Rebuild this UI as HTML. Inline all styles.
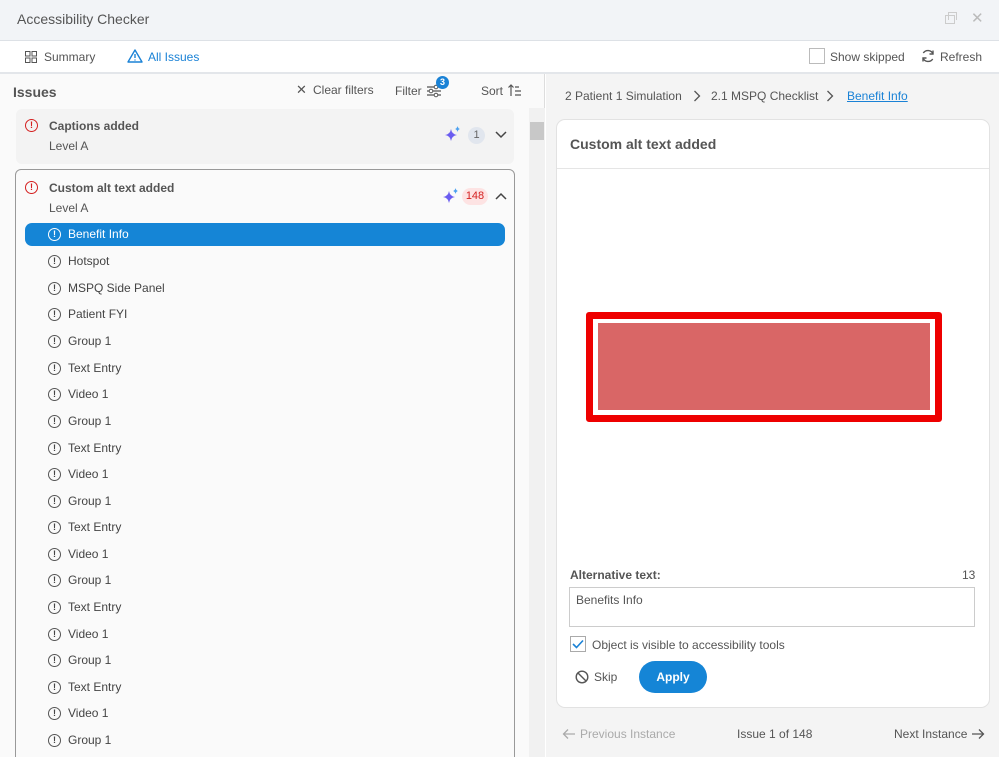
<!DOCTYPE html><html><head><style>
*{box-sizing:border-box;margin:0;padding:0}
html,body{width:999px;height:757px;overflow:hidden}
body{font-family:"Liberation Sans",sans-serif;font-size:12px;color:#444;background:#fff;position:relative}
.a{position:absolute}
.ic{display:inline-block;width:13px;height:13px;border:1.5px solid #555;border-radius:50%;position:absolute;font-size:9px;font-weight:bold;text-align:center;line-height:10px}
.item{position:absolute;left:48px;font-size:12px;color:#444}
.item .ic{left:0;top:0}
.item span{position:absolute;left:20px;top:-1px;white-space:nowrap}
</style></head><body>
<div class="a" style="left:0;top:0;width:999px;height:41px;background:#f2f4f7;border-bottom:1px solid #dde1e6"></div>
<div class="a" style="left:17px;top:11px;font-size:14px;color:#555">Accessibility Checker</div>
<div class="a" style="left:948px;top:12px;width:9px;height:8px;border:1.5px solid #ccc;border-bottom:none"></div>
<div class="a" style="left:945px;top:15px;width:10px;height:9px;border:1.5px solid #ccc"></div>
<div class="a" style="left:971px;top:9px;font-size:15px;color:#bbb">✕</div>
<div class="a" style="left:0;top:72px;width:999px;height:2px;background:#e3e6ea"></div>
<svg class="a" style="left:25px;top:51px" width="12" height="12"><rect x="0.5" y="0.5" width="4.5" height="4.5" fill="none" stroke="#555"/><rect x="7" y="0.5" width="4.5" height="4.5" fill="none" stroke="#555"/><rect x="0.5" y="7" width="4.5" height="4.5" fill="none" stroke="#555"/><rect x="7" y="7" width="4.5" height="4.5" fill="none" stroke="#555"/></svg>
<div class="a" style="left:44px;top:50px;color:#555">Summary</div>
<svg class="a" style="left:127px;top:49px" width="16" height="14"><path d="M8 1L15 13H1Z" fill="none" stroke="#1a82d6" stroke-width="1.4" stroke-linejoin="round"/><path d="M8 5v4M8 10.5v1" stroke="#1a82d6" stroke-width="1.4"/></svg>
<div class="a" style="left:148px;top:50px;color:#1a82d6">All Issues</div>
<div class="a" style="left:809px;top:48px;width:16px;height:16px;border:1px solid #bbb"></div>
<div class="a" style="left:830px;top:50px;color:#555">Show skipped</div>
<svg class="a" style="left:921px;top:49px" width="14" height="14"><path d="M12 5A5.5 5.5 0 0 0 2.3 4M2 9a5.5 5.5 0 0 0 9.7 1" fill="none" stroke="#555" stroke-width="1.4"/><path d="M12 1.5V5H8.5M2 12.5V9h3.5" fill="none" stroke="#555" stroke-width="1.4"/></svg>
<div class="a" style="left:940px;top:50px;color:#555">Refresh</div>
<!-- left -->
<div class="a" style="left:0;top:74px;width:545px;height:683px;background:#fafafa;border-right:1px solid #ddd"></div>
<div class="a" style="left:13px;top:84px;font-size:14px;font-weight:bold;color:#555">Issues</div>
<div class="a" style="left:296px;top:82px;font-size:13px;color:#555">✕</div>
<div class="a" style="left:313px;top:83px;color:#555">Clear filters</div>
<div class="a" style="left:395px;top:84px;color:#555">Filter</div>
<svg class="a" style="left:426px;top:84px" width="16" height="14"><path d="M1 3h14M1 7h14M1 11h14" stroke="#555" stroke-width="1.2"/><circle cx="10" cy="3" r="1.8" fill="#fff" stroke="#555"/><circle cx="5" cy="7" r="1.8" fill="#fff" stroke="#555"/><circle cx="10" cy="11" r="1.8" fill="#fff" stroke="#555"/></svg>
<div class="a" style="left:436px;top:76px;width:13px;height:13px;border-radius:50%;background:#1a82d6;color:#fff;font-size:9px;font-weight:bold;text-align:center;line-height:13px">3</div>
<div class="a" style="left:481px;top:84px;color:#555">Sort</div>
<svg class="a" style="left:508px;top:83px" width="14" height="14"><path d="M3 13V2M0.5 4.5L3 2l2.5 2.5M7 4h4M7 8h6M7 12h6" fill="none" stroke="#555" stroke-width="1.2"/></svg>
<div class="a" style="left:529px;top:108px;width:16px;height:649px;background:#f1f1f1"></div>
<div class="a" style="left:530px;top:122px;width:14px;height:18px;background:#c8c8c8"></div>
<div class="a" style="left:16px;top:109px;width:498px;height:55px;background:#f3f3f3;border-radius:6px"></div>
<div class="ic" style="left:25px;top:119px;border-color:#d42020;color:#d42020">!</div>
<div class="a" style="left:49px;top:119px;font-weight:bold;color:#555">Captions added</div>
<div class="a" style="left:49px;top:139px;color:#555">Level A</div>
<svg class="a" style="left:445px;top:126px" width="16" height="16"><path d="M6 3Q6.8 8.2 12 9 6.8 9.8 6 15 5.2 9.8 0 9 5.2 8.2 6 3Z" fill="#6a5cf0"/><path d="M12.5 0Q13 2.5 15 3 13 3.5 12.5 6 12 3.5 10 3 12 2.5 12.5 0Z" fill="#4aa0f0"/></svg>
<div class="a" style="left:468px;top:127px;width:17px;height:17px;border-radius:50%;background:#e1e6ee;text-align:center;line-height:17px;font-size:11px;color:#666">1</div>
<svg class="a" style="left:495px;top:131px" width="12" height="8"><path d="M1 1l5 5 5-5" fill="none" stroke="#444" stroke-width="1.5"/></svg>
<div class="a" style="left:15px;top:169px;width:500px;height:600px;border:1px solid #999;border-radius:6px;background:#fafafa"></div>
<div class="ic" style="left:25px;top:181px;border-color:#d42020;color:#d42020">!</div>
<div class="a" style="left:49px;top:181px;font-weight:bold;color:#555">Custom alt text added</div>
<div class="a" style="left:49px;top:201px;color:#555">Level A</div>
<svg class="a" style="left:443px;top:188px" width="16" height="16"><path d="M6 3Q6.8 8.2 12 9 6.8 9.8 6 15 5.2 9.8 0 9 5.2 8.2 6 3Z" fill="#6a5cf0"/><path d="M12.5 0Q13 2.5 15 3 13 3.5 12.5 6 12 3.5 10 3 12 2.5 12.5 0Z" fill="#4aa0f0"/></svg>
<div class="a" style="left:462px;top:188px;width:26px;height:17px;border-radius:9px;background:#fde3e3;text-align:center;line-height:17px;font-size:11px;color:#d42020">148</div>
<svg class="a" style="left:495px;top:192px" width="12" height="8"><path d="M1 7l5-5 5 5" fill="none" stroke="#444" stroke-width="1.5"/></svg>
<div class="a" style="left:25px;top:223px;width:480px;height:23px;border-radius:7px;background:#1585d6"></div>
<div class="item" style="top:228px;color:#fff"><i class="ic" style="border-color:#fff;color:#fff;font-style:normal">!</i><span>Benefit Info</span></div>
<div class="item" style="top:255px"><i class="ic" style="font-style:normal">!</i><span>Hotspot</span></div>
<div class="item" style="top:282px"><i class="ic" style="font-style:normal">!</i><span>MSPQ Side Panel</span></div>
<div class="item" style="top:308px"><i class="ic" style="font-style:normal">!</i><span>Patient FYI</span></div>
<div class="item" style="top:335px"><i class="ic" style="font-style:normal">!</i><span>Group 1</span></div>
<div class="item" style="top:362px"><i class="ic" style="font-style:normal">!</i><span>Text Entry</span></div>
<div class="item" style="top:388px"><i class="ic" style="font-style:normal">!</i><span>Video 1</span></div>
<div class="item" style="top:415px"><i class="ic" style="font-style:normal">!</i><span>Group 1</span></div>
<div class="item" style="top:442px"><i class="ic" style="font-style:normal">!</i><span>Text Entry</span></div>
<div class="item" style="top:468px"><i class="ic" style="font-style:normal">!</i><span>Video 1</span></div>
<div class="item" style="top:495px"><i class="ic" style="font-style:normal">!</i><span>Group 1</span></div>
<div class="item" style="top:521px"><i class="ic" style="font-style:normal">!</i><span>Text Entry</span></div>
<div class="item" style="top:548px"><i class="ic" style="font-style:normal">!</i><span>Video 1</span></div>
<div class="item" style="top:574px"><i class="ic" style="font-style:normal">!</i><span>Group 1</span></div>
<div class="item" style="top:601px"><i class="ic" style="font-style:normal">!</i><span>Text Entry</span></div>
<div class="item" style="top:628px"><i class="ic" style="font-style:normal">!</i><span>Video 1</span></div>
<div class="item" style="top:654px"><i class="ic" style="font-style:normal">!</i><span>Group 1</span></div>
<div class="item" style="top:681px"><i class="ic" style="font-style:normal">!</i><span>Text Entry</span></div>
<div class="item" style="top:707px"><i class="ic" style="font-style:normal">!</i><span>Video 1</span></div>
<div class="item" style="top:734px"><i class="ic" style="font-style:normal">!</i><span>Group 1</span></div>
<!-- right -->
<div class="a" style="left:546px;top:74px;width:453px;height:683px;background:#f4f4f4"></div>
<div class="a" style="left:565px;top:89px;color:#555">2 Patient 1 Simulation</div>
<svg class="a" style="left:693px;top:90px" width="8" height="12"><path d="M1.5 1l5 5-5 5" fill="none" stroke="#555" stroke-width="1.3"/></svg>
<div class="a" style="left:711px;top:89px;color:#555">2.1 MSPQ Checklist</div>
<svg class="a" style="left:826px;top:90px" width="8" height="12"><path d="M1.5 1l5 5-5 5" fill="none" stroke="#555" stroke-width="1.3"/></svg>
<div class="a" style="left:847px;top:89px;color:#1a82d6;text-decoration:underline">Benefit Info</div>
<div class="a" style="left:556px;top:119px;width:434px;height:589px;background:#fff;border:1px solid #e2e2e2;border-radius:9px"></div>
<div class="a" style="left:557px;top:168px;width:432px;height:1px;background:#e5e5e5"></div>
<div class="a" style="left:570px;top:136px;font-size:14px;font-weight:bold;color:#555">Custom alt text added</div>
<div class="a" style="left:586px;top:312px;width:356px;height:110px;border:7px solid #ee0000;border-radius:3px;background:#fff"></div>
<div class="a" style="left:598px;top:323px;width:332px;height:87px;background:#d96666"></div>
<div class="a" style="left:570px;top:568px;font-weight:bold;color:#555">Alternative text:</div>
<div class="a" style="left:962px;top:568px;color:#555">13</div>
<div class="a" style="left:569px;top:587px;width:406px;height:40px;border:1px solid #ccc"></div>
<div class="a" style="left:576px;top:593px;color:#555">Benefits Info</div>
<div class="a" style="left:570px;top:636px;width:16px;height:16px;border:1px solid #aaa;background:#fff"></div>
<svg class="a" style="left:572px;top:639px" width="12" height="10"><path d="M1 5l3.5 3.5L11 1.5" fill="none" stroke="#1a82d6" stroke-width="1.6"/></svg>
<div class="a" style="left:592px;top:638px;color:#555">Object is visible to accessibility tools</div>
<svg class="a" style="left:575px;top:670px" width="14" height="14"><circle cx="7" cy="7" r="5.8" fill="none" stroke="#555" stroke-width="1.4"/><path d="M3 3l8 8" stroke="#555" stroke-width="1.4"/></svg>
<div class="a" style="left:594px;top:670px;color:#555">Skip</div>
<div class="a" style="left:639px;top:661px;width:68px;height:32px;border-radius:16px;background:#1585d6;color:#fff;font-weight:bold;text-align:center;line-height:32px">Apply</div>
<svg class="a" style="left:562px;top:728px" width="14" height="12"><path d="M13 6H1.5M6 1.5L1.5 6 6 10.5" fill="none" stroke="#aaa" stroke-width="1.3"/></svg>
<div class="a" style="left:580px;top:727px;color:#aaa">Previous Instance</div>
<div class="a" style="left:737px;top:727px;color:#555">Issue 1 of 148</div>
<div class="a" style="left:894px;top:727px;color:#555">Next Instance</div>
<svg class="a" style="left:971px;top:728px" width="14" height="12"><path d="M1 6h11.5M8 1.5L12.5 6 8 10.5" fill="none" stroke="#555" stroke-width="1.3"/></svg>
</body></html>
